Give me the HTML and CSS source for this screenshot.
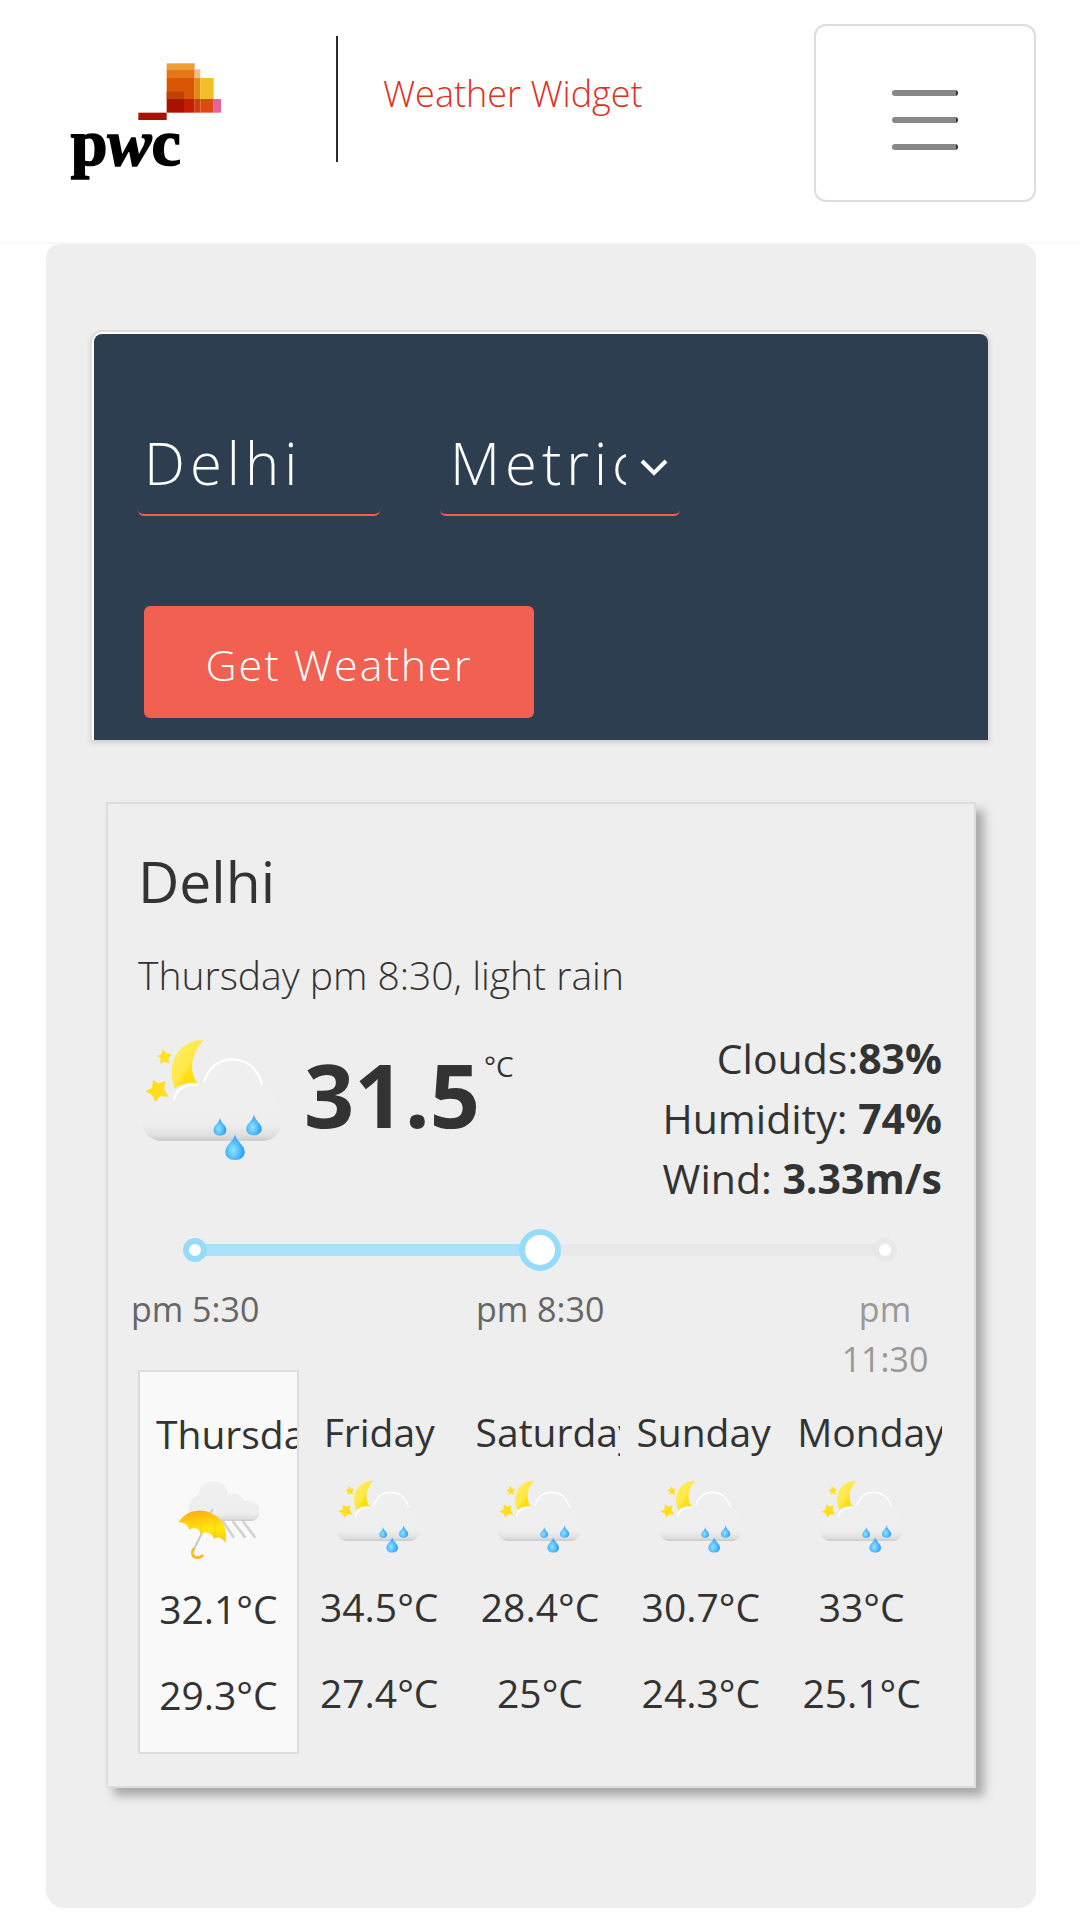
FILE: index.html
```html
<!DOCTYPE html>
<html lang="en">
<head>
<meta charset="utf-8">
<meta name="viewport" content="width=device-width, initial-scale=1">
<title>Weather Widget</title>
<link rel="stylesheet" href="styles.css">
</head>
<body>
<svg class="defs" aria-hidden="true">
  <defs>
    <linearGradient id="cloud" x1="0" y1="0" x2="0" y2="1">
      <stop offset="0" stop-color="#f0f0f0"/><stop offset=".8" stop-color="#eeeeee"/><stop offset=".94" stop-color="#dfdfdf"/><stop offset="1" stop-color="#c9c9c9"/>
    </linearGradient>
    <linearGradient id="moon" x1="0" y1="0" x2="1" y2="1">
      <stop offset="0" stop-color="#ffef60"/><stop offset=".5" stop-color="#ffe84a"/><stop offset=".6" stop-color="#ffde12"/><stop offset="1" stop-color="#fddc10"/>
    </linearGradient>
    <radialGradient id="drop" cx=".4" cy=".62" r=".55">
      <stop offset="0" stop-color="#8ee6ff"/><stop offset="1" stop-color="#2ea0fb"/>
    </radialGradient>
    <linearGradient id="umbrella" x1=".3" y1="0" x2=".5" y2="1">
      <stop offset="0" stop-color="#ffab17"/><stop offset=".6" stop-color="#ffe90c"/><stop offset="1" stop-color="#ffcb10"/>
    </linearGradient>
    <symbol id="night-rain" viewBox="25 0 450 450">
      <path d="M221 34C150 30 104 104 136 180C150 166 176 158 204 163C178 128 182 80 221 34Z" fill="url(#moon)"/>
      <path d="M99 59L109 73L126 75L116 89L121 104L105 98L92 104L93 89L82 80L96 75Z" fill="#ffdf28"/>
      <path d="M70 152L86 163L108 157L103 178L116 203L91 202L77 218L68 199L47 187L67 177Z" fill="#ffde20"/>
      <path d="M84 335C55 330 35 302 36 276C38 240 82 212 132 214C137 184 165 162 204 166L222 160C236 115 265 88 308 88C353 88 385 117 399 169C435 185 459 228 458 272C456 312 433 331 405 335Z" fill="url(#cloud)"/>
      <path d="M133 211C138 184 164 164 202 168M224 156C240 112 268 91 308 91C350 91 382 117 397 164" fill="none" stroke="#fff" stroke-width="7" stroke-linecap="round"/>
      <path d="M271 266C268 284 252 287 252 303C252 314 260 320 271 320C282 320 290 314 290 303C290 287 274 284 271 266Z" fill="url(#drop)"/>
      <path d="M373 256C370 278 350 282 350 299C350 311 359 319 373 319C386 319 396 311 396 299C396 282 376 278 373 256Z" fill="url(#drop)"/>
      <path d="M316 316C313 338 287 346 287 369C287 383 298 393 316 393C334 393 345 383 345 369C345 346 319 338 316 316Z" fill="url(#drop)"/>
    </symbol>
    <symbol id="umbrella-rain" viewBox="39 21 270 270">
      <path d="M188 156L222 206M218 156L256 206M248 156L286 206" fill="none" stroke="#d2d2d2" stroke-width="8"/>
      <path d="M106 155C82 144 74 94 111 82C112 50 134 33 159 33C187 33 205 50 208 74C225 68 246 76 253 96C280 91 299 104 299 126C299 144 288 156 272 156Z" fill="url(#cloud)"/>
      <path d="M113 78C114 52 135 35 159 35C185 35 202 49 206 72M214 72C231 69 246 78 252 94" fill="none" stroke="#fff" stroke-width="3"/>
      <path d="M158 121L152 132M130 184L102 240" fill="none" stroke="#c9c9c9" stroke-width="6"/>
      <path d="M55 160C79 124 119 117 150 131C189 146 203 178 196 222C188 207 175 201 162 209C155 193 143 186 122 194C116 178 105 174 88 182C82 165 70 158 55 160Z" fill="url(#umbrella)"/>
      <path d="M88 182C92 158 112 135 147 131C127 145 117 170 122 194M162 209C169 176 167 148 150 131" fill="none" stroke="#ffbd12" stroke-width="2"/>
      <path d="M102 238C92 252 98 266 112 266C121 266 126 263 128 257" fill="none" stroke="#ffb81f" stroke-width="8"/>
    </symbol>
  </defs>
</svg>

<header class="topbar">
  <svg class="logo" viewBox="-12 -12 600 480" role="img" aria-label="pwc">
    <rect x="350" y="70" width="84" height="18" fill="#f09e33"/>
    <rect x="350" y="88" width="84" height="26" fill="#e5741a"/>
    <rect x="434" y="88" width="17" height="26" fill="#f2b98c"/>
    <rect x="350" y="114" width="84" height="63" fill="#d85604"/>
    <rect x="434" y="114" width="17" height="63" fill="#e68a0c"/>
    <rect x="451" y="114" width="40" height="63" fill="#f3be26"/>
    <rect x="350" y="155" width="52" height="22" fill="#bd4300"/>
    <rect x="350" y="177" width="52" height="41" fill="#a91200"/>
    <rect x="402" y="177" width="32" height="41" fill="#c41d00"/>
    <rect x="434" y="177" width="17" height="41" fill="#d03c10"/>
    <rect x="451" y="177" width="40" height="41" fill="#db4a12"/>
    <rect x="491" y="177" width="22" height="41" fill="#e8639d"/>
    <rect x="265" y="218" width="85" height="22" fill="#a91008"/>
    <text class="logo-word" x="62" y="375">p<tspan font-style="italic">w</tspan>c</text>
  </svg>
  <span class="divider"></span>
  <h1 class="title">Weather Widget</h1>
  <button class="menu" type="button" aria-label="Menu"><span class="bar"></span><span class="bar"></span><span class="bar"></span></button>
</header>

<main class="panel">
  <div class="search-frame">
    <form class="search">
      <div class="fields">
        <input class="field" type="text" value="Delhi" aria-label="City">
        <select class="field units" aria-label="Units"><option>Metric</option><option>Imperial</option></select>
      </div>
      <button class="submit" type="button">Get Weather</button>
    </form>
  </div>

  <section class="weather">
    <h2 class="city">Delhi</h2>
    <p class="summary">Thursday pm 8:30, light rain</p>
    <div class="current">
      <svg class="icon-large" role="img" aria-label="Light rain at night"><use href="#night-rain"/></svg>
      <span class="temp">31.5</span><span class="unit">°C</span>
      <div class="details">
        <div>Clouds:<b>83%</b></div>
        <div>Humidity: <b>74%</b></div>
        <div>Wind: <b>3.33m/s</b></div>
      </div>
    </div>
    <div class="slider">
      <input class="range" type="range" min="0" max="2" value="1" aria-label="Time">
      <span class="stop stop-first"></span>
      <span class="stop stop-last"></span>
    </div>
    <div class="ticks">
      <span class="tick">pm 5:30</span>
      <span class="tick">pm 8:30</span>
      <span class="tick tick-off">pm<br>11:30</span>
    </div>
    <ul class="days">
      <li class="day day-selected"><div class="name">Thursday</div><svg class="icon" aria-hidden="true"><use href="#umbrella-rain"/></svg><div class="high">32.1°C</div><div class="low">29.3°C</div></li>
      <li class="day"><div class="name">Friday</div><svg class="icon" aria-hidden="true"><use href="#night-rain"/></svg><div class="high">34.5°C</div><div class="low">27.4°C</div></li>
      <li class="day"><div class="name">Saturday</div><svg class="icon" aria-hidden="true"><use href="#night-rain"/></svg><div class="high">28.4°C</div><div class="low">25°C</div></li>
      <li class="day"><div class="name">Sunday</div><svg class="icon" aria-hidden="true"><use href="#night-rain"/></svg><div class="high">30.7°C</div><div class="low">24.3°C</div></li>
      <li class="day"><div class="name">Monday</div><svg class="icon" aria-hidden="true"><use href="#night-rain"/></svg><div class="high">33°C</div><div class="low">25.1°C</div></li>
    </ul>
  </section>
</main>
</body>
</html>
```

FILE: styles.css
```css
* { box-sizing: border-box; }
body {
  margin: 0;
  background: #fff;
  color: #333;
  font-family: "Open Sans", "Noto Sans", sans-serif;
  font-size: 39px;
  line-height: 60px;
}
.defs { position: absolute; width: 0; height: 0; }

.topbar {
  display: flex;
  align-items: flex-start;
  padding: 24px 44px 40px 46px;
  border-bottom: 2px solid #f8f8f8;
}
.logo { width: 200px; height: 160px; margin-top: 12px; flex: none; }
.logo-word { font: bold 198px "Liberation Serif", serif; fill: #000; stroke: #000; stroke-width: 5px; }
.divider { width: 2px; height: 126px; margin: 12px 0 0 90px; background: #2b2b2b; }
.title { margin: 44px 0 0 45px; font-size: 36px; line-height: 52px; font-weight: 300; color: #e0301e; }
.menu {
  display: flex;
  flex-direction: column;
  align-items: center;
  justify-content: center;
  gap: 21px;
  width: 222px;
  height: 178px;
  margin-left: auto;
  padding: 14px 0 0;
  background: #fff;
  border: 2px solid #ddd;
  border-radius: 12px;
}
.bar { width: 66px; height: 6px; border-radius: 3px; background: linear-gradient(90deg, #888 64px, #333 64px); }

.panel {
  margin: 0 44px 12px 46px;
  padding: 86px 46px 120px 44px;
  background: #eee;
  border-radius: 14px 14px 18px 18px;
}
.search-frame {
  padding: 2px 0 0 2px;
  background: #fff;
  border: 2px solid #ddd;
  border-bottom: 0;
  border-radius: 12px 12px 0 0;
  box-shadow: 0 3px 4px rgba(0, 0, 0, .12);
}
.search {
  padding: 84px 44px 22px;
  background: #2d3e50;
  border-radius: 8px 8px 0 0;
}
.fields { display: flex; gap: 60px; }
.field {
  width: 242px;
  height: 98px;
  padding: 0 4px 8px 6px;
  color: #fff;
  background: transparent;
  border: 0 solid #f26052;
  border-bottom-width: 2px;
  border-radius: 6px;
  font-family: inherit;
  font-size: 58px;
  font-weight: 300;
  letter-spacing: 5px;
}
.units {
  width: 240px;
  padding: 0 54px 8px 10px;
  appearance: none;
  background: url("data:image/svg+xml,%3Csvg xmlns='http://www.w3.org/2000/svg' width='28' height='18' fill='none' stroke='white' stroke-width='4'%3E%3Cpath d='M2 2L14 14L26 2'/%3E%3C/svg%3E") no-repeat 200px 41px;
}
.submit {
  display: block;
  width: 390px;
  height: 112px;
  margin: 90px 0 0 6px;
  padding: 4px 0 0;
  color: #fff;
  background: #f26052;
  border: 0;
  border-radius: 6px;
  font-family: inherit;
  font-size: 43px;
  font-weight: 300;
  letter-spacing: 2px;
}

.weather {
  margin: 62px 14px 0 16px;
  padding: 37px 32px 32px 30px;
  border: 2px solid #ddd;
  box-shadow: 8px 8px 9px #aaa;
}
.city { margin: 0; font-size: 57px; line-height: 80px; font-weight: 400; }
.summary { margin: 24px 0 22px; font-weight: 300; }
.current { display: flex; align-items: flex-start; }
.icon-large { width: 150px; height: 150px; margin-top: 2px; }
.temp { margin: 7px 0 0 16px; font-size: 88px; line-height: 120px; font-weight: 700; }
.unit { margin: 20px 0 0 4px; font-size: 28px; line-height: 38px; }
.details { margin: 1px 0 0 auto; font-size: 41px; text-align: right; }

.slider { position: relative; height: 42px; margin: 21px 45px 0 45px; }
.range { display: block; appearance: none; width: 100%; height: 42px; margin: 0; background: none; }
.range::-webkit-slider-runnable-track {
  height: 12px;
  border-radius: 6px;
  background: linear-gradient(90deg, #abe2fb 50%, #e8e8e8 50%);
}
.range::-webkit-slider-thumb {
  appearance: none;
  width: 42px;
  height: 42px;
  margin-top: -15px;
  background: #fff;
  border: 6px solid #96dbfa;
  border-radius: 50%;
}
.stop {
  position: absolute;
  top: 9px;
  width: 24px;
  height: 24px;
  background: #fff;
  border: 6px solid #96dbfa;
  border-radius: 50%;
}
.stop-first { left: 0; }
.stop-last { right: 0; border-color: #e8e8e8; }
.ticks {
  display: flex;
  justify-content: space-between;
  align-items: flex-start;
  margin: 13px -7px -14px;
  font-size: 34px;
  line-height: 50px;
  color: #666;
}
.tick { width: 128px; text-align: center; white-space: nowrap; }
.tick-off { color: #999; }

.days { display: grid; grid-template-columns: repeat(5, minmax(0, 1fr)); margin: 0; padding: 0; list-style: none; }
.day {
  height: 384px;
  padding: 32px 16px 28px;
  overflow: hidden;
  text-align: center;
  white-space: nowrap;
}
.day-selected { background: #f9f9f9; border: 2px solid #ddd; }
.icon { display: block; width: 90px; height: 90px; margin: 12px auto 13px; }
.low { margin-top: 26px; }
```
